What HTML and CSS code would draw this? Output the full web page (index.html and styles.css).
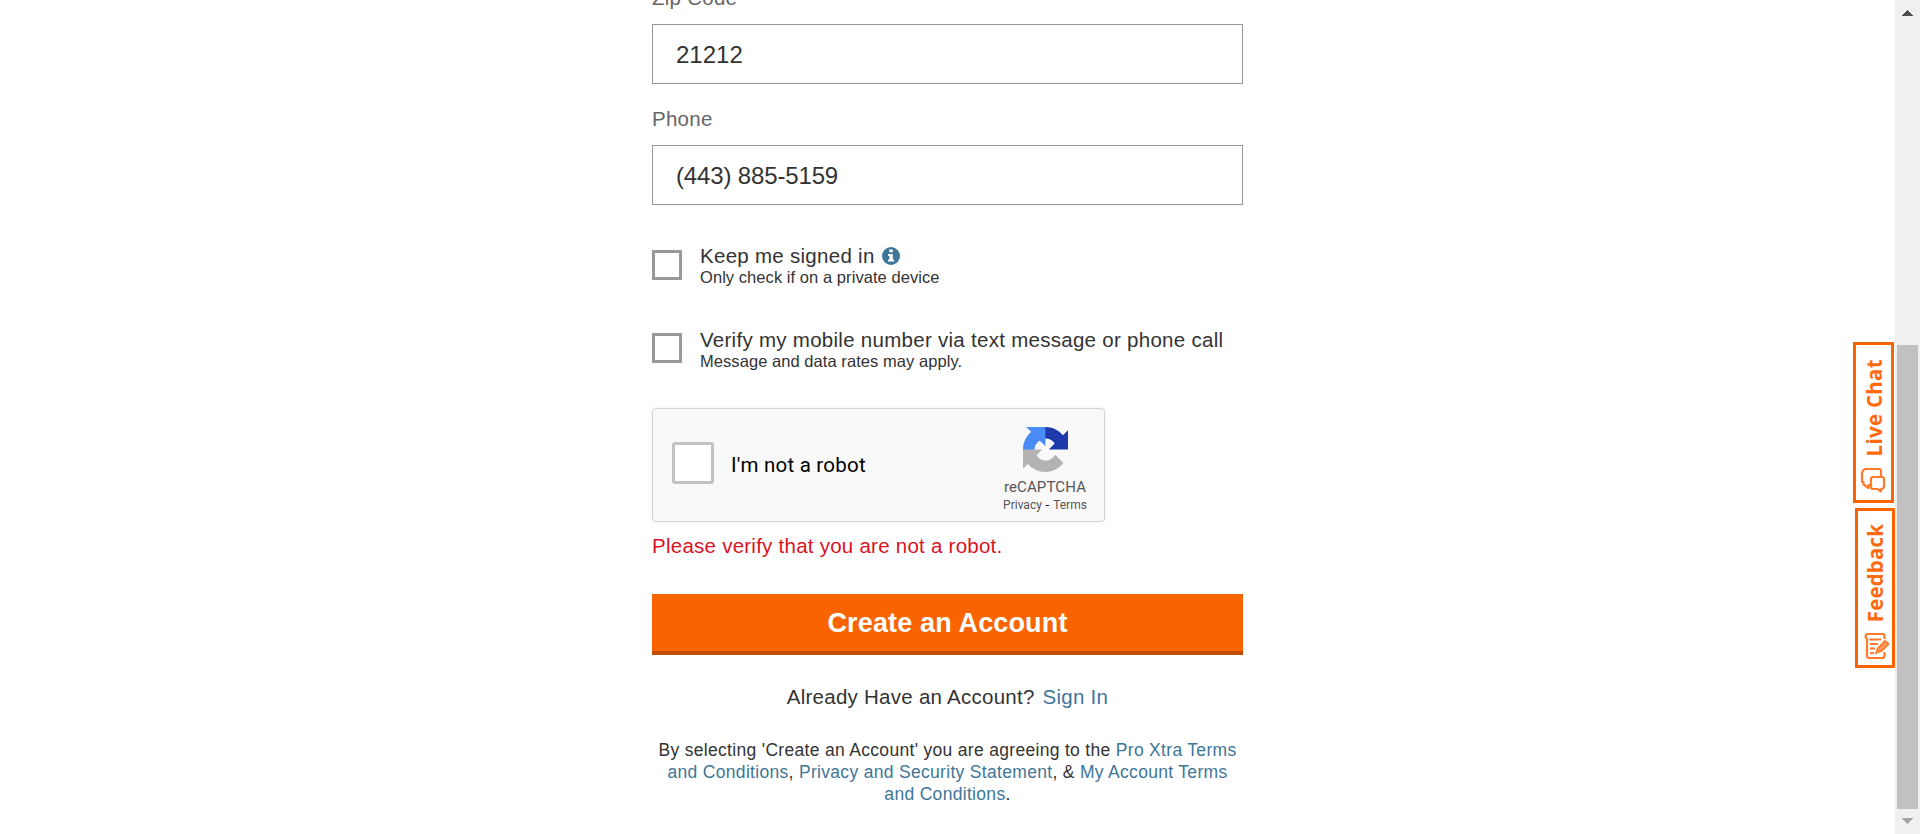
FILE: index.html
```html
<!DOCTYPE html>
<html lang="en">
<head>
<meta charset="utf-8">
<title>Create an Account</title>
<link rel="stylesheet" href="styles.css">
</head>
<body>
<div class="viewport">
  <main class="form">
    <div class="field">
      <label class="label zip-label">Zip Code</label>
      <div class="input"><span>21212</span></div>
    </div>
    <div class="field">
      <label class="label">Phone</label>
      <div class="input"><span class="phone">(443) 885-5159</span></div>
    </div>
    <div class="check-row">
      <span class="box"></span>
      <div class="check-text">
        <div class="check-title"><span>Keep me signed in</span>
          <svg class="info" viewBox="0 0 18 18"><circle cx="9" cy="9" r="9" fill="#3e7697"/><path d="M7.300 2.600h3.500v2.700H7.300zM6.100 6.900h4.700v5.500h1.300v2H6.100v-2h1.300V8.900H6.100z" fill="#fff"/></svg>
        </div>
        <div class="check-note"><span>Only check if on a private device</span></div>
      </div>
    </div>
    <div class="check-row second">
      <span class="box"></span>
      <div class="check-text">
        <div class="check-title"><span>Verify my mobile number via text message or phone call</span></div>
        <div class="check-note"><span>Message and data rates may apply.</span></div>
      </div>
    </div>
    <div class="captcha">
      <span class="captcha-box"></span>
      <span class="captcha-label">I'm not a robot</span>
      <div class="brand">
        <svg class="logo" viewBox="0 0 64 64"><path d="M64 31.955l-.033-1.37V4.687l-7.16 7.16C50.948 4.674 42.033.093 32.05.093c-10.4 0-19.622 4.960-25.458 12.640l11.736 11.860a15.550 15.550 0 0 1 4.754-5.334c2.050-1.600 4.952-2.906 8.968-2.906.485 0 .860.057 1.135.163 4.976.393 9.288 3.140 11.828 7.124l-8.307 8.307L64 31.953" fill="#1c3aa9"/><path d="M31.862.094l-1.370.033H4.594l7.160 7.160C4.580 13.147 0 22.060 0 32.046c0 10.400 4.960 19.622 12.640 25.458L24.500 45.768a15.550 15.550 0 0 1-5.334-4.754c-1.600-2.050-2.906-4.952-2.906-8.968 0-.485.057-.860.163-1.135.393-4.976 3.140-9.288 7.124-11.828l8.307 8.307L31.860.095" fill="#4a8cf6"/><path d="M.001 32.045l.033 1.370v25.898l7.160-7.160c5.860 7.173 14.774 11.754 24.760 11.754 10.400 0 19.622-4.960 25.458-12.640l-11.736-11.860a15.550 15.550 0 0 1-4.754 5.334c-2.050 1.600-4.952 2.906-8.968 2.906-.485 0-.860-.057-1.135-.163-4.976-.393-9.288-3.140-11.828-7.124l8.307-8.307c-10.522.040-22.400.066-27.295-.005" fill="#b3b3b3"/></svg>
        <div class="brand-name">reCAPTCHA</div>
        <div class="brand-links"><span>Privacy</span><span class="dash">-</span><span>Terms</span></div>
      </div>
    </div>
    <div class="error"><span>Please verify that you are not a robot.</span></div>
    <div class="submit"><span>Create an Account</span></div>
    <div class="signin"><span>Already Have an Account?</span><a>Sign In</a></div>
    <div class="terms">
      <div>By selecting 'Create an Account' you are agreeing to the <a>Pro Xtra Terms</a></div>
      <div><a>and Conditions</a>, <a>Privacy and Security Statement</a>, &amp; <a>My Account Terms</a></div>
      <div><a>and Conditions</a>.</div>
    </div>
  </main>
  <div class="tab chat">
    <span class="tab-text">Live Chat</span>
    <svg class="tab-icon" viewBox="0 0 26 26" fill="none" stroke="#ff7a2a" stroke-width="2.2" stroke-linejoin="round"><path d="M11 18H8.500V21L3.500 17.500V15H2V6Q3 2 6 2H19Q21 2 21 4V10"/><path d="M13 10H22Q24 10 24 12V19Q24 22 21 22V24.500L17.500 22H13Q11 22 11 20V12Q11 10 13 10Z"/></svg>
  </div>
  <div class="tab feedback">
    <span class="tab-text">Feedback</span>
    <svg class="tab-icon" viewBox="0 0 26 26" fill="none" stroke="#ff7a2a" stroke-width="2.2"><path d="M20.500 6V3Q20.500 1 18.500 1H4Q1.500 1 1.500 4L3 6V23Q3 25 5 25H18Q20.500 25 20.500 22V19"/><path d="M5 6.500H17M6 11H14M6 15.500H11M6 20H10" stroke-width="1.8"/><path d="M12 20L14 15L21 8L24.500 11L17.500 18Z" fill="#ff9a5c" stroke-width="1.8"/></svg>
  </div>
  <div class="scrollbar">
    <svg class="arrow" viewBox="0 0 11 6" shape-rendering="crispEdges"><path d="M0 6L5.500 0L11 6Z" fill="#505050"/></svg>
    <div class="thumb"></div>
    <svg class="arrow down" viewBox="0 0 11 6" shape-rendering="crispEdges"><path d="M0 0L5.500 6L11 0Z" fill="#a3a3a3"/></svg>
  </div>
</div>
</body>
</html>
```
FILE: styles.css
```css
* { box-sizing: border-box; }
body { margin: 0; background: #fff; color: #333; font-family: "Liberation Sans", Arial, sans-serif; }
a { color: #3e7697; text-decoration: none; }
.viewport { position: relative; display: flex; justify-content: space-between; height: 834px; overflow: hidden; }
.form { width: 591px; margin-left: 652px; margin-top: -14px; }
.field { margin-bottom: 23px; }
.label { display: block; height: 24px; line-height: 24px; margin-bottom: 14px; font-size: 20.5px; color: #666; letter-spacing: 0.25px; white-space: nowrap; }
.input { display: flex; align-items: center; height: 60px; padding-top: 2px; padding-left: 23px; border: 1px solid #979797; font-size: 24px; }
.phone { letter-spacing: -0.15px; }
.check-row { display: flex; gap: 18px; height: 42px; margin-top: 40px; white-space: nowrap; }
.check-row.second { margin-top: 42px; }
.box { width: 30px; height: 30px; margin-top: 5px; border: 3px solid #999; }
.second .box { margin-top: 4px; }
.check-title { display: flex; align-items: center; gap: 7px; height: 22px; font-size: 20.5px; letter-spacing: 0.28px; }
.check-note { height: 20px; line-height: 20px; font-size: 16.5px; letter-spacing: 0.06px; }
.info { width: 18px; height: 18px; }
.captcha { display: flex; align-items: center; width: 453px; height: 114px; margin-top: 37px; padding: 0 16px 0 19px; border: 1px solid #d3d3d3; border-radius: 4px; background: #f9f9f9; box-shadow: 0 0 5px rgba(0,0,0,.08); font-family: Roboto, sans-serif; }
.captcha-box { width: 42px; height: 42px; margin-top: -4px; border: 3px solid #c1c1c1; border-radius: 3px; background: #fff; }
.captcha-label { margin-left: 17px; font-size: 20.5px; letter-spacing: 0.23px; color: #000; white-space: nowrap; }
.brand { display: flex; flex-direction: column; align-items: center; width: 86px; height: 96px; padding-top: 10px; margin-left: auto; color: #555; white-space: nowrap; }
.logo { width: 45px; height: 45px; flex: none; }
.brand-name { height: 20px; line-height: 20px; margin-top: 5px; font-size: 15px; letter-spacing: 0.12px; }
.brand-links { display: flex; gap: 4px; height: 16px; line-height: 16px; font-size: 12px; }
.dash { color: #000; }
.error { height: 24px; line-height: 24px; margin-top: 12px; color: #d9121f; font-size: 20.5px; letter-spacing: 0.25px; white-space: nowrap; }
.submit { display: flex; align-items: center; justify-content: center; height: 61px; margin-top: 36px; padding-top: 1px; border-bottom: 4px solid #c24d00; background: #fa6400; color: #fff; font-size: 27px; letter-spacing: 0.15px; font-weight: bold; }
.signin { display: flex; justify-content: center; gap: 8px; height: 24px; line-height: 24px; margin-top: 30px; font-size: 20.5px; letter-spacing: 0.26px; white-space: nowrap; }
.terms { margin-top: 30px; line-height: 22px; font-size: 17.5px; letter-spacing: 0.31px; text-align: center; white-space: nowrap; }
.tab { position: absolute; display: flex; flex-direction: column; align-items: center; border: 3px solid #fa6400; background: #fff; color: #ff6a10; font: 700 20.5px "Open Sans", sans-serif; }
.chat { left: 1853px; top: 342px; width: 41px; height: 161px; padding-top: 14px; letter-spacing: 0.3px; }
.feedback { left: 1855px; top: 508px; width: 40px; height: 160px; padding-top: 13px; letter-spacing: 0.15px; }
.tab-text { writing-mode: vertical-rl; transform: rotate(180deg); line-height: 24px; white-space: nowrap; }
.tab-icon { position: absolute; left: 4px; bottom: 7px; width: 26px; height: 26px; }
.feedback .tab-icon { left: 6px; bottom: 6px; }
.scrollbar { display: flex; flex-direction: column; align-items: center; width: 25px; height: 834px; padding: 10px 0; background: #f0f0f0; }
.arrow { flex: none; width: 11px; height: 6px; }
.thumb { flex: none; width: 21px; height: 464px; margin-top: 329px; margin-bottom: 9px; background: #c1c1c1; }
```
